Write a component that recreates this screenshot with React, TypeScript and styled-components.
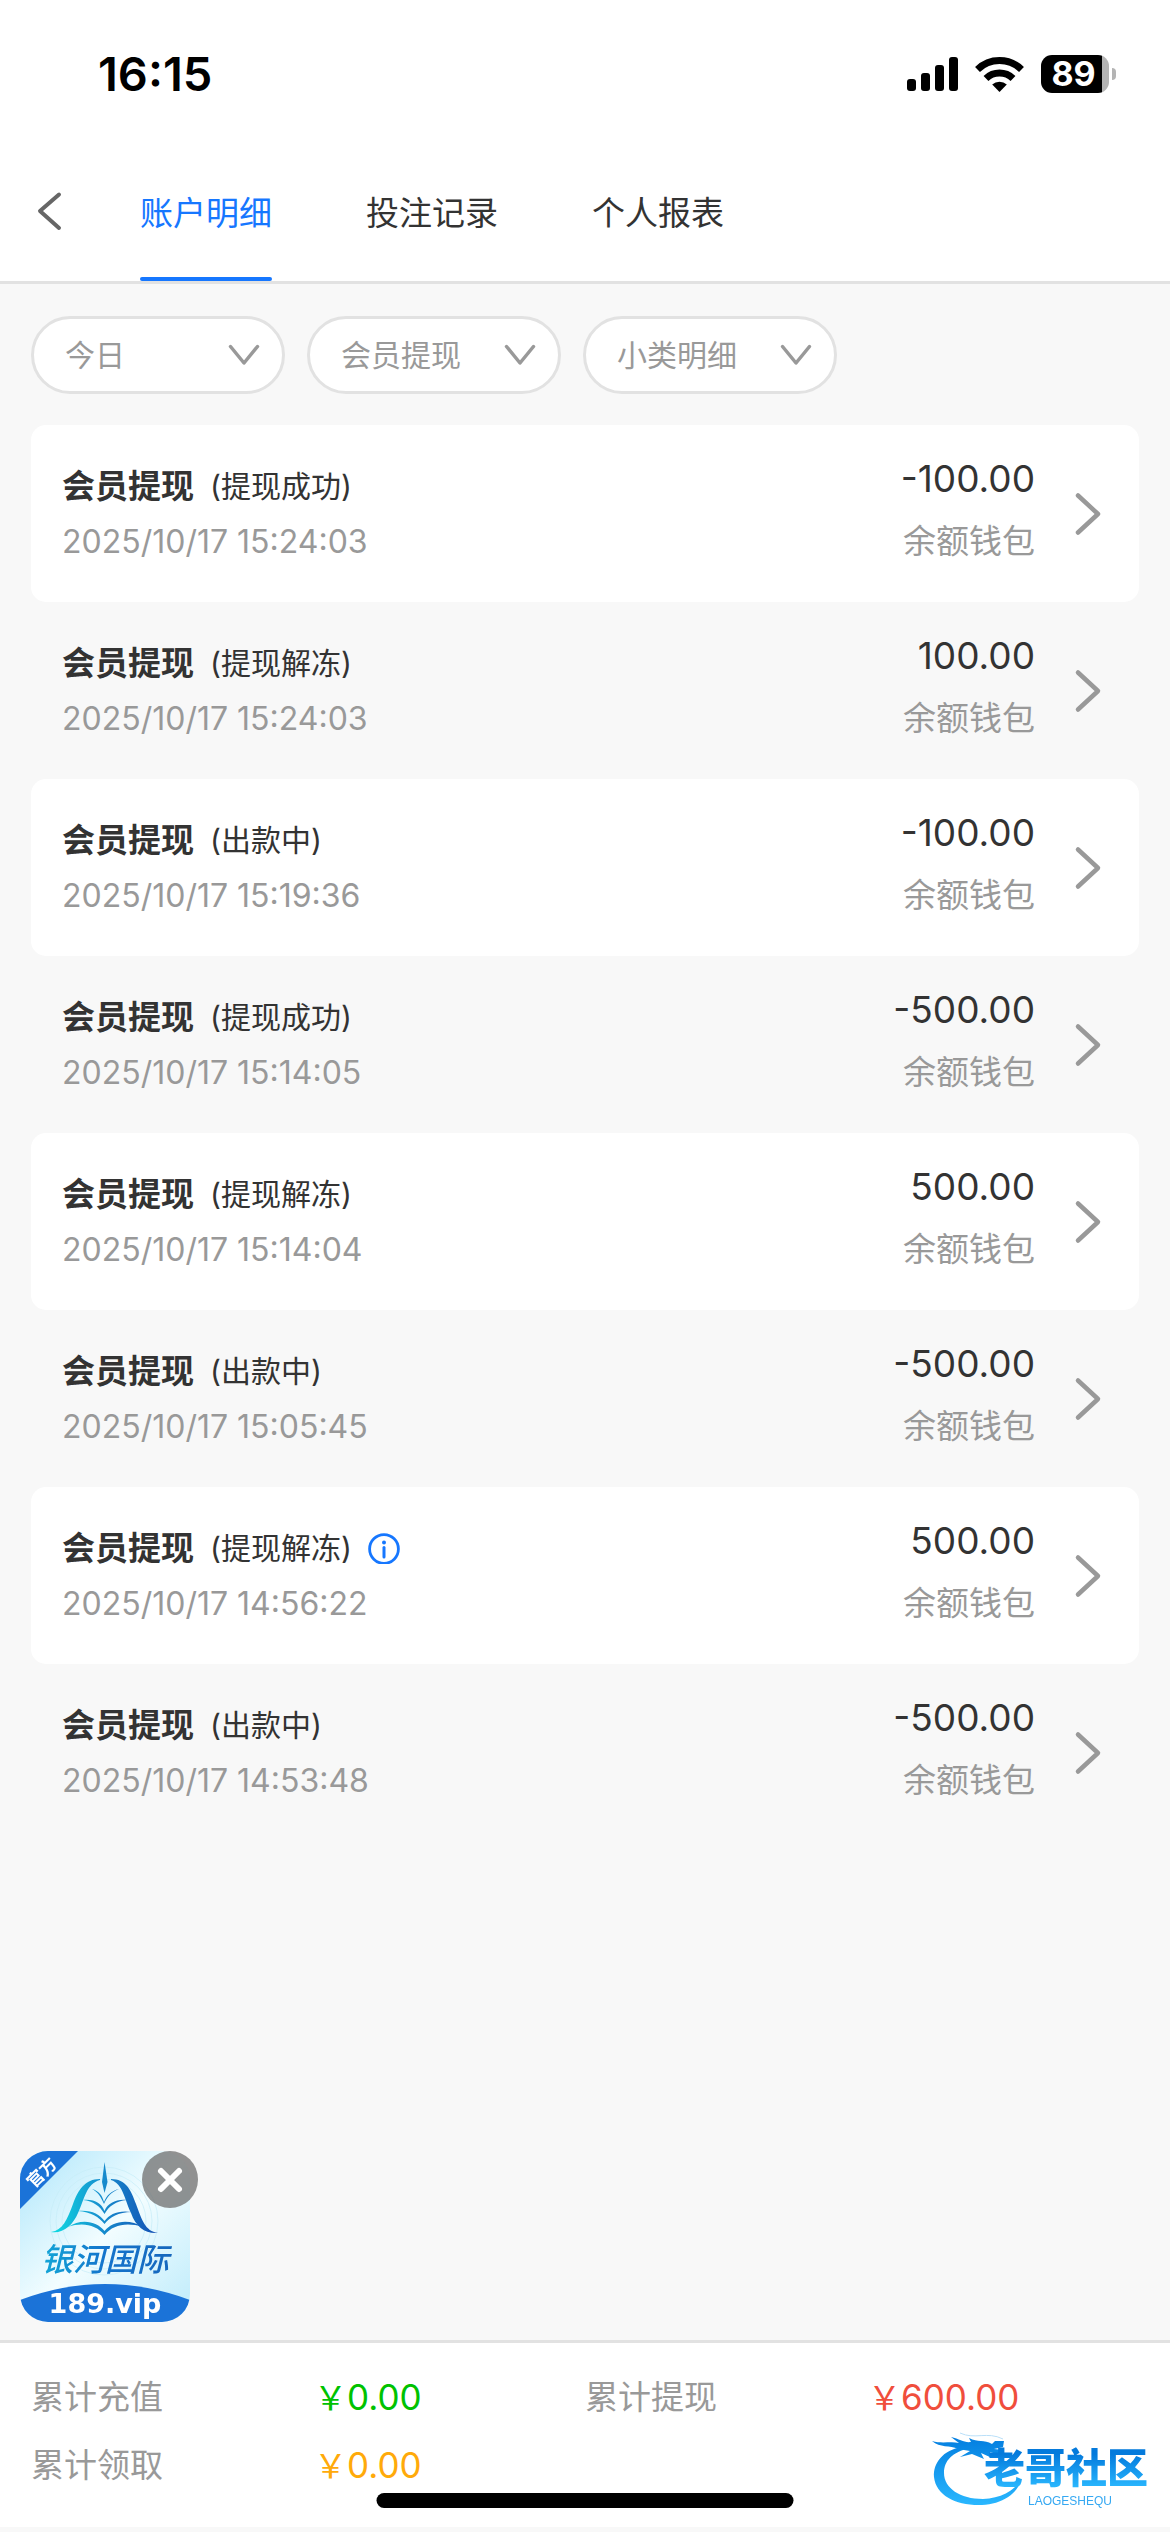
import React, { useState } from "react";
import styled, { createGlobalStyle } from "styled-components";

const GlobalStyle = createGlobalStyle`
  *, *::before, *::after { box-sizing: border-box; }
  body {
    margin: 0;
    background: #f8f8f8;
    color: #333;
    font-family: Inter, "Noto Sans CJK SC", sans-serif;
    font-size: 33px;
  }
  button, select {
    margin: 0;
    padding: 0;
    border: 0;
    background: none;
    color: inherit;
    font: inherit;
    cursor: pointer;
  }
`;

const Page = styled.div`
  display: flex;
  flex-direction: column;
  min-height: 100vh;
  padding-bottom: 5px;
`;

const StatusBar = styled.div`
  display: flex;
  align-items: center;
  justify-content: space-between;
  height: 141px;
  padding: 6px 54px 0 98px;
  background: #fff;
  color: #000;
`;

const Clock = styled.time`
  font-size: 47px;
  font-weight: 600;
`;

const StatusIcons = styled.div`
  display: flex;
  align-items: center;
  gap: 17px;
`;

const Battery = styled.div`
  display: flex;
  align-items: center;
  gap: 3px;
`;

const BatteryBody = styled.div`
  width: 68px;
  height: 38px;
  padding-right: 3px;
  border-radius: 11px;
  background: linear-gradient(to right, #000 89%, #b4b4b4 89%);
  color: #fff;
  font-size: 34px;
  font-weight: 700;
  line-height: 38px;
  text-align: center;
`;

const BatteryCap = styled.div`
  width: 4px;
  height: 12px;
  border-radius: 0 6px 6px 0;
  background: #b4b4b4;
`;

const Header = styled.header`
  display: flex;
  height: 143px;
  border-bottom: 3px solid #e2e2e2;
  background: #fff;
`;

const BackButton = styled.button`
  display: flex;
  align-items: center;
  width: 140px;
  padding-left: 36px;
`;

const Tabs = styled.nav`
  display: flex;
  gap: 94px;
`;

const Tab = styled.button<{ $active: boolean }>`
  position: relative;
  color: ${(p) => (p.$active ? "#1677ff" : "#333")};
  white-space: nowrap;

  &::after {
    content: "";
    position: absolute;
    right: 0;
    bottom: 0;
    left: 0;
    height: 4px;
    border-radius: 2px;
    background: ${(p) => (p.$active ? "#1677ff" : "transparent")};
  }
`;

const Filters = styled.div`
  display: flex;
  gap: 22px;
  padding: 32px 31px 31px;
`;

const FilterBox = styled.label`
  display: grid;
  align-items: center;
  width: 254px;

  > * {
    grid-area: 1 / 1;
  }

  svg {
    justify-self: end;
    margin-right: 25px;
    pointer-events: none;
  }
`;

const FilterSelect = styled.select`
  width: 100%;
  height: 78px;
  padding: 0 70px 0 31px;
  border: 3px solid #e2e2e2;
  border-radius: 39px;
  appearance: none;
  background: #fff;
  color: #999;
  font-size: 30px;
`;

const Records = styled.ul`
  flex: 1;
  margin: 0;
  padding: 0 31px 32px;
  list-style: none;
`;

const RecordItem = styled.li`
  border-radius: 15px;

  &:nth-child(odd) {
    background: #fff;
  }
`;

const RecordButton = styled.button`
  display: flex;
  width: 100%;
  height: 177px;
  padding: 0 36px 0 31px;
  text-align: left;
`;

const Summary = styled.div`
  flex: 1;
  padding-top: 33px;
  line-height: 56px;
`;

const TitleLine = styled.div`
  display: flex;
  align-items: center;
  gap: 16px;
`;

const Title = styled.strong`
  font-weight: 700;
`;

const State = styled.span`
  font-size: 30px;
`;

const Stamp = styled.time`
  display: block;
  color: #999;
  font-size: 32px;
`;

const Money = styled.div`
  padding-top: 22px;
  line-height: 63px;
  text-align: right;
`;

const Amount = styled.div`
  font-size: 37px;
`;

const Wallet = styled.div`
  color: #999;
`;

const RowArrow = styled.svg`
  align-self: center;
  margin-left: 38px;
`;

const Totals = styled.dl`
  display: grid;
  grid-template-columns: repeat(2, 1fr);
  row-gap: 12px;
  height: 187px;
  margin: 0;
  padding: 26px 31px 0;
  align-content: start;
  border-top: 3px solid #e2e2e2;
  background: #fff;
  line-height: 56px;
`;

const Total = styled.div`
  display: grid;
  grid-template-columns: 283px 1fr;
  height: 56px;
`;

const TotalLabel = styled.dt`
  color: #999;
`;

const TotalValue = styled.dd<{ $color: string }>`
  margin: 0;
  color: ${(p) => p.$color};
  font-size: 35px;
`;

const Yen = styled.span`
  font-size: 33px;
  line-height: 1;
`;

const Promo = styled.aside`
  position: fixed;
  bottom: 210px;
  left: 20px;
  display: flex;
`;

const PromoLink = styled.a`
  display: block;
  width: 170px;
  height: 171px;
  overflow: hidden;
  border-radius: 28px;
`;

const CloseButton = styled.button`
  position: absolute;
  top: 0;
  left: 122px;
  display: flex;
  align-items: center;
  justify-content: center;
  width: 56px;
  height: 57px;
  border-radius: 50%;
  background: rgba(112, 112, 112, 0.76);
`;

const HomeIndicator = styled.div`
  position: fixed;
  bottom: 24px;
  left: 50%;
  width: 417px;
  height: 15px;
  border-radius: 8px;
  background: #000;
  transform: translateX(-50%);
`;

const Community = styled.svg`
  position: fixed;
  right: 14px;
  bottom: 22px;
`;

const tabs = ["账户明细", "投注记录", "个人报表"];
const filters = [
  { name: "日期", value: "今日" },
  { name: "类型", value: "会员提现" },
  { name: "小类", value: "小类明细" },
];

type Entry = { state: string; at: string; amount: string; info?: boolean };

const entries: Entry[] = [
  { state: "提现成功", at: "2025/10/17 15:24:03", amount: "-100.00" },
  { state: "提现解冻", at: "2025/10/17 15:24:03", amount: "100.00" },
  { state: "出款中", at: "2025/10/17 15:19:36", amount: "-100.00" },
  { state: "提现成功", at: "2025/10/17 15:14:05", amount: "-500.00" },
  { state: "提现解冻", at: "2025/10/17 15:14:04", amount: "500.00" },
  { state: "出款中", at: "2025/10/17 15:05:45", amount: "-500.00" },
  { state: "提现解冻", at: "2025/10/17 14:56:22", amount: "500.00", info: true },
  { state: "出款中", at: "2025/10/17 14:53:48", amount: "-500.00" },
];

const totals = [
  { label: "累计充值", value: "0.00", color: "#00c200" },
  { label: "累计提现", value: "600.00", color: "#f04e3c" },
  { label: "累计领取", value: "0.00", color: "#ffaa0a" },
];

function SignalIcon() {
  return (
    <svg width="51" height="34" viewBox="0 0 51 34" aria-hidden="true">
      <rect x="0" y="22" width="9" height="12" rx="3" />
      <rect x="14" y="16" width="9" height="18" rx="3" />
      <rect x="28" y="8" width="9" height="26" rx="3" />
      <rect x="42" y="0" width="9" height="34" rx="3" />
    </svg>
  );
}

function WifiIcon() {
  return (
    <svg width="49" height="36" viewBox="0 0 49 36" aria-hidden="true">
      <g fill="none" stroke="#000" strokeWidth="7">
        <path d="M2.5 13.5 A31.5 31.5 0 0 1 46.5 13.5" />
        <path d="M11 22.5 A19.5 19.5 0 0 1 38 22.5" />
      </g>
      <path d="M24.5 36 L17.2 28.6 A10.5 10.5 0 0 1 31.8 28.6 Z" />
    </svg>
  );
}

function InfoIcon() {
  return (
    <svg width="32" height="32" viewBox="0 0 32 32" aria-label="说明" role="img">
      <circle cx="16" cy="17" r="14.4" fill="none" stroke="#1677ff" strokeWidth="2.8" />
      <circle cx="16" cy="10.5" r="2" fill="#1677ff" />
      <path d="M16 15.5V25" stroke="#1677ff" strokeWidth="3" strokeLinecap="round" />
    </svg>
  );
}

function PromoArt() {
  return (
    <svg width="170" height="171" viewBox="0 0 170 171" role="img" aria-label="银河国际 189.vip">
      <defs>
        <linearGradient id="promoSky" x1="0" y1="0" x2="1" y2="1">
          <stop offset="0" stopColor="#aee6fb" />
          <stop offset="0.5" stopColor="#f2fdff" />
          <stop offset="1" stopColor="#bdebfb" />
        </linearGradient>
        <linearGradient id="promoBook" gradientUnits="userSpaceOnUse" x1="32" y1="0" x2="137" y2="0">
          <stop offset="0" stopColor="#0edbe2" />
          <stop offset="0.45" stopColor="#1690cf" />
          <stop offset="1" stopColor="#1450b4" />
        </linearGradient>
        <linearGradient id="promoName" gradientUnits="userSpaceOnUse" x1="18" y1="0" x2="152" y2="0">
          <stop offset="0" stopColor="#12a9d8" />
          <stop offset="0.5" stopColor="#1474cc" />
          <stop offset="1" stopColor="#1667bd" />
        </linearGradient>
      </defs>
      <rect width="170" height="171" fill="url(#promoSky)" />
      <g fill="none" stroke="#c7edf8" opacity="0.7">
        <circle cx="84" cy="70" r="42" />
        <circle cx="84" cy="70" r="48" />
        <circle cx="84" cy="70" r="54" />
      </g>
      <path d="M0 0H58L0 58Z" fill="#1b73d8" />
      <text x="21" y="28" transform="rotate(-45 21 21)" textAnchor="middle" fill="#fff" fontSize="17" fontWeight="700" fontFamily="Noto Sans CJK SC, sans-serif">官方</text>
      <g fill="url(#promoBook)">
        <path d="M84.500 11 L87.500 31 L84.500 42 L82 31Z" />
        <path d="M80 28 C65 28 58 39 53 53 C47 69 43 79 31 81 C43 83 53 74 58 62 C65 47 66 33 80 29Z" />
        <path d="M91 28 C106 28 111 39 116 53 C122 69 125 80 138 82 C125 83 116 76 111 62 C104 47 103 33 91 29Z" />
        <path d="M72 38 C79 40 82 44 84 51 C87 44 91 40 99 38 C91 41 87 46 84 53 C81 46 78 41 72 38Z" />
        <path d="M63 49 C75 48 81 52 84.500 60 C88 52 96 48 107 49 C96 50 89 55 84.500 63 C80 55 73 50 63 49Z" />
        <path d="M58 60 C72 59 79 63 84.500 70 C90 63 98 59 112 61 C98 61 90 66 84.500 73 C79 66 71 61 58 60Z" />
        <path d="M48 76 C61 67 77 70 84.500 80 C92 70 109 67 123 76 C106 71 93 74 84.500 84 C76 74 63 71 48 76Z" />
      </g>
      <text x="85" y="120" textAnchor="middle" fill="url(#promoName)" fontSize="32" fontStyle="italic" fontWeight="500" fontFamily="Noto Sans CJK SC, sans-serif">银河国际</text>
      <path d="M0 149 Q85 117 170 149 V171 H0Z" fill="#1b73d8" />
      <text x="85" y="162" textAnchor="middle" fill="#fff" fontSize="27" fontWeight="700" fontFamily="DejaVu Sans, sans-serif">189.vip</text>
    </svg>
  );
}

function CommunityLogo() {
  return (
    <Community width="224" height="80" viewBox="0 0 224 80" role="img" aria-label="老哥社区">
      <defs>
        <linearGradient id="dragonBlue" gradientUnits="userSpaceOnUse" x1="0" y1="8" x2="0" y2="76">
          <stop offset="0" stopColor="#047fe0" />
          <stop offset="1" stopColor="#2ab8ff" />
        </linearGradient>
        <linearGradient id="nameBlue" gradientUnits="userSpaceOnUse" x1="0" y1="24" x2="0" y2="58">
          <stop offset="0" stopColor="#047adc" />
          <stop offset="1" stopColor="#2ab8ff" />
        </linearGradient>
      </defs>
      <g fill="url(#dragonBlue)">
        <path d="M30 17 C11 20 1 33 2 47 C4 66 25 76 50 75 C70 74 86 64 89 49 C82 62 68 68 51 69 C28 69 12 58 12 43 C12 31 20 22 38 18Z" />
        <path d="M0 11 C10 14 19 11 27 13 L19 7 C28 9 32 13 39 12 L37 8 C46 13 52 9 60 14 L63 11 L72 11 L71 17 L62 19 L71 20 L68 25 L58 22 L60 28 L49 23 L52 29 L40 24 L28 27 L38 21 L26 19 C18 15 8 18 0 11Z" />
      </g>
      <path d="M28 3 C43 10 55 1 71 9" fill="none" stroke="#b9dff8" strokeWidth="1" />
      <text x="52" y="53" fill="url(#nameBlue)" fontSize="41" fontWeight="900" fontFamily="Noto Sans CJK SC, sans-serif">老哥社区</text>
      <text x="96" y="75" fill="#35a8f2" fontSize="12" fontFamily="Liberation Sans, sans-serif">LAOGESHEQU</text>
    </Community>
  );
}

export default function App() {
  const [active, setActive] = useState(tabs[0]);
  const [promoOpen, setPromoOpen] = useState(true);

  return (
    <Page>
      <GlobalStyle />
      <StatusBar>
        <Clock>16:15</Clock>
        <StatusIcons>
          <SignalIcon />
          <WifiIcon />
          <Battery>
            <BatteryBody>89</BatteryBody>
            <BatteryCap />
          </Battery>
        </StatusIcons>
      </StatusBar>

      <Header>
        <BackButton aria-label="返回">
          <svg width="28" height="42" viewBox="0 0 28 42" fill="none" stroke="#666" strokeWidth="4" strokeLinecap="round" strokeLinejoin="round">
            <path d="M23 4.500 L4 21 L23 38" />
          </svg>
        </BackButton>
        <Tabs>
          {tabs.map((tab) => (
            <Tab key={tab} $active={tab === active} onClick={() => setActive(tab)}>
              {tab}
            </Tab>
          ))}
        </Tabs>
      </Header>

      <Filters>
        {filters.map((filter) => (
          <FilterBox key={filter.name}>
            <FilterSelect aria-label={filter.name}>
              <option>{filter.value}</option>
            </FilterSelect>
            <svg width="32" height="22" viewBox="0 0 32 22" fill="none" stroke="#999" strokeWidth="3.500" strokeLinecap="round" strokeLinejoin="round">
              <path d="M2.500 2.500 L16 19 L29.500 2.500" />
            </svg>
          </FilterBox>
        ))}
      </Filters>

      <Records>
        {entries.map((entry, index) => (
          <RecordItem key={index}>
            <RecordButton>
              <Summary>
                <TitleLine>
                  <Title>会员提现</Title>
                  <State>({entry.state})</State>
                  {entry.info && <InfoIcon />}
                </TitleLine>
                <Stamp>{entry.at}</Stamp>
              </Summary>
              <Money>
                <Amount>{entry.amount}</Amount>
                <Wallet>余额钱包</Wallet>
              </Money>
              <RowArrow width="30" height="46" viewBox="0 0 30 46" fill="none" stroke="#999" strokeWidth="4.500" strokeLinecap="round" strokeLinejoin="round">
                <path d="M5 4.500 L25 23 L5 41.500" />
              </RowArrow>
            </RecordButton>
          </RecordItem>
        ))}
      </Records>

      <Totals>
        {totals.map((total) => (
          <Total key={total.label}>
            <TotalLabel>{total.label}</TotalLabel>
            <TotalValue $color={total.color}>
              <Yen>{"\uFFE5"}</Yen>
              {total.value}
            </TotalValue>
          </Total>
        ))}
      </Totals>

      {promoOpen && (
        <Promo>
          <PromoLink href="#promo">
            <PromoArt />
          </PromoLink>
          <CloseButton aria-label="关闭" onClick={() => setPromoOpen(false)}>
            <svg width="28" height="28" viewBox="0 0 28 28" stroke="#fff" strokeWidth="6" strokeLinecap="round">
              <path d="M5 5 L23 23 M23 5 L5 23" />
            </svg>
          </CloseButton>
        </Promo>
      )}
      <HomeIndicator />
      <CommunityLogo />
    </Page>
  );
}
